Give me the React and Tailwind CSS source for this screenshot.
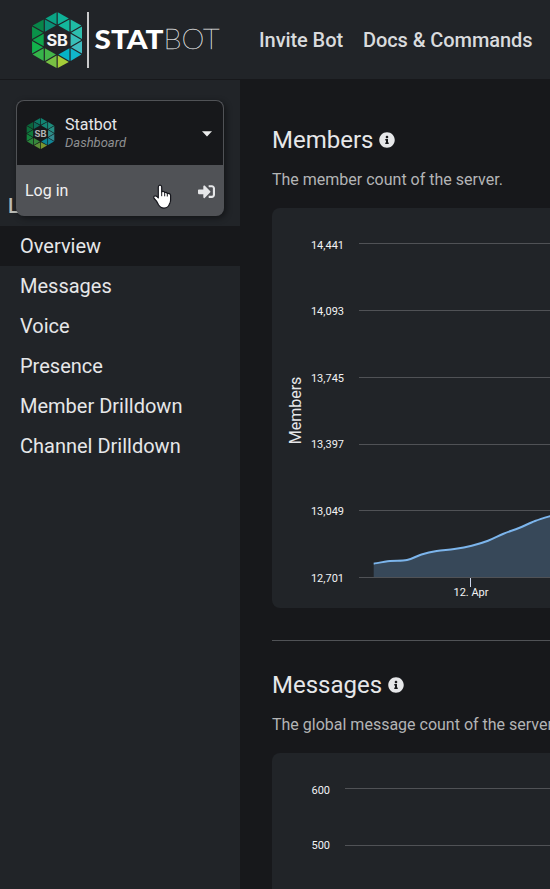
import React from "react";
import { FaInfoCircle, FaSignInAlt } from "react-icons/fa";

const triangles = [
  ["110,36 110,77 73,57", "#0aa384"],
  ["110,36 110,77 147,57", "#0fb298"],
  ["73,57 73,98 110,77", "#0b8f76"],
  ["147,57 147,98 110,77", "#14b79c"],
  ["36,77 73,57 73,98", "#088549"],
  ["36,77 36,119 73,98", "#0a9249"],
  ["36,119 73,98 73,140", "#0ca54b"],
  ["36,119 36,161 73,140", "#12b14c"],
  ["36,161 73,140 73,182", "#35b44a"],
  ["73,140 73,182 110,161", "#44b649"],
  ["73,182 110,161 110,202", "#78c143"],
  ["110,202 110,161 147,182", "#a5cd39"],
  ["147,140 147,182 110,161", "#06b4c6"],
  ["183,161 147,140 147,182", "#10b5cb"],
  ["183,119 183,161 147,140", "#3fbcc0"],
  ["183,119 147,98 147,140", "#38bfb9"],
  ["183,77 183,119 147,98", "#2dbfae"],
  ["183,77 147,57 147,98", "#1fbca5"],
];

function shrink(points, k) {
  const p = points.split(" ").map((s) => s.split(",").map(Number));
  const cx = (p[0][0] + p[1][0] + p[2][0]) / 3;
  const cy = (p[0][1] + p[1][1] + p[2][1]) / 3;
  return p.map(([x, y]) => `${cx + (x - cx) * k},${cy + (y - cy) * k}`).join(" ");
}

function Hexagon({ className }) {
  return (
    <svg viewBox="38 38.5 143 161" className={className}>
      {triangles.map(([pts, fill]) => (
        <polygon key={pts} points={shrink(pts, 0.86)} fill={fill} />
      ))}
      <text
        x="79"
        y="135"
        textLength="62"
        lengthAdjust="spacingAndGlyphs"
        fill="#f4f5f6"
        fontFamily="Inter, sans-serif"
        fontWeight="700"
        fontSize="44"
      >
        SB
      </text>
    </svg>
  );
}

function Logo() {
  return (
    <div className="flex h-14 items-center">
      <Hexagon className="h-[56px] w-[50px]" />
      <div className="ml-[5px] h-14 w-[2px] bg-[#c9cacb]" />
      <svg viewBox="0 0 132 40" className="ml-[5px] h-10 w-[132px]">
        <text x="0.5" y="28.500" textLength="69" lengthAdjust="spacingAndGlyphs" fill="#ffffff" fontFamily="Lato, sans-serif" fontWeight="900" fontSize="27">
          STAT
        </text>
        <text
          x="69.5"
          y="28.500"
          textLength="56"
          lengthAdjust="spacingAndGlyphs"
          fill="#d4d5d6"
          stroke="#d4d5d6"
          strokeWidth="0.35"
          fontFamily="Lato, sans-serif"
          fontWeight="100"
          fontSize="27"
        >
          BOT
        </text>
      </svg>
    </div>
  );
}

function Pointer() {
  return (
    <svg viewBox="0 0 19 25" className="absolute top-[84px] left-[137px] h-[25px] w-[19px]">
      <path
        d="M5.300 3c0-1.200.8-1.900 1.700-1.900s1.700.7 1.700 1.900v4.900c.4-.5 1-.6 1.600-.5.700.1 1.200.5 1.400 1.100.9-.4 2.200-.1 2.500 1 1.400-.4 3.400.1 3.400 2.100v4.600c0 1.900-.6 3-1.300 4.200-.7 2-2 3.700-5.300 3.700-2.800 0-4.300-1.200-5.500-3.300l-2-3.700L1.200 14.500c-.8-1-.5-2.100.4-2.500.9-.4 1.700-.1 2.400.6l1.300 1.300z"
        fill="#ffffff"
        stroke="#15161c"
        strokeWidth="1.200"
        strokeLinejoin="round"
      />
      <path d="M8.700 7.900v4.300M11.700 8.500v3.800M14.300 9.500v3" stroke="#15161c" strokeWidth="1" fill="none" />
    </svg>
  );
}

const navItems = ["Overview", "Messages", "Voice", "Presence", "Member Drilldown", "Channel Drilldown"];

function Sidebar() {
  return (
    <aside className="relative w-60 shrink-0 bg-[#212428]">
      <div className="flex h-[146px] items-end pb-[5px] pl-[8px]">
        <span className="text-xl leading-[30px] font-medium text-[#bcbdb8]">L</span>
      </div>
      <nav>
        {navItems.map((label, i) => (
          <div key={label} className={`flex h-10 items-center pl-5 text-xl text-[#e6e7e9] ${i === 0 ? "bg-[#17181b]" : ""}`}>
            {label}
          </div>
        ))}
      </nav>
      <div className="absolute top-5 left-4 w-52 rounded-[8px] shadow-[2px_2px_6px_rgba(0,0,0,0.45)]">
        <div className="flex h-[65px] items-center rounded-t-[8px] border border-b-0 border-[#505256] bg-[#17181b] pr-[11px] pl-[9px]">
          <Hexagon className="h-[31px] w-[29px] opacity-70" />
          <div className="ml-[10px] flex-1">
            <div className="text-base leading-[19px] text-[#e6e7e9]">Statbot</div>
            <div className="text-[13px] leading-[17px] text-[#8f9092] italic">Dashboard</div>
          </div>
          <svg viewBox="0 0 10 6" className="mt-[2px] h-[6px] w-[10px]">
            <path d="M0 .3h10L5 5.600z" fill="#eceded" />
          </svg>
        </div>
        <div className="flex h-[51px] items-center justify-between rounded-b-[8px] bg-[#505256] pr-[9px] pl-[9px] text-base text-[#f0f0f1]">
          Log in
          <FaSignInAlt className="mt-px size-[17px] text-[#e6e7e9]" />
        </div>
        <Pointer />
      </div>
    </aside>
  );
}

const curve = [
  [101.7, 355.7], [118, 353], [135, 352], [149.5, 346.5], [164.7, 343], [182.3, 341],
  [199.7, 337.7], [216, 332.7], [231.5, 325.7], [247, 320], [263, 313], [278, 308.2], [294, 304],
];

function smooth(p) {
  let d = `M${p[0][0]} ${p[0][1]}`;
  for (let i = 0; i < p.length - 1; i++) {
    const a = p[i - 1] || p[i];
    const b = p[i];
    const c = p[i + 1];
    const e = p[i + 2] || c;
    d += `C${b[0] + (c[0] - a[0]) / 6} ${b[1] + (c[1] - a[1]) / 6} ${c[0] - (e[0] - b[0]) / 6} ${c[1] - (e[1] - b[1]) / 6} ${c[0]} ${c[1]}`;
  }
  return d;
}

function Chart({ ticks, left, labelX, title, points }) {
  return (
    <div className="h-[400px] w-[600px] rounded-[8px] bg-[#212428]">
      <svg viewBox="0 0 600 400" className="size-full" fontFamily="Roboto, sans-serif" fontSize="11" fill="#e6e7e9">
        {ticks.map(([label, y, baseline]) => (
          <g key={label}>
            <path d={`M${left} ${y}H600`} stroke="#505256" />
            <text x={labelX} y={baseline} textAnchor="end" fill="#f2f3f4">{label}</text>
          </g>
        ))}
        {title && (
          <text transform="translate(28.5 202.500) rotate(-90)" textAnchor="middle" fontSize="16">{title}</text>
        )}
        {points && (
          <>
            <path d={`${smooth(points)}V369H${points[0][0]}Z`} fill="#7cb5ec" fillOpacity="0.25" />
            <path d={smooth(points)} fill="none" stroke="#7cb5ec" strokeWidth="2" />
            <path d="M198.5 370v9" stroke="#ccd6eb" />
            <text x="199" y="388" textAnchor="middle" fill="#f2f3f4">12. Apr</text>
          </>
        )}
      </svg>
    </div>
  );
}

function Section({ title, description, children }) {
  return (
    <section>
      <h2 className="flex items-center text-2xl leading-[30px] text-[#e6e7e9]">
        {title}
        <FaInfoCircle className="ml-[6px] size-4" />
      </h2>
      <p className="mt-[13px] mb-4 text-base leading-6 whitespace-nowrap text-[#b3b4b5]">{description}</p>
      {children}
    </section>
  );
}

export default function App() {
  return (
    <div className="flex h-[889px] w-[550px] flex-col overflow-hidden bg-[#17181b] font-[Roboto,sans-serif]">
      <header className="flex h-20 shrink-0 items-center border-b border-[#17181b] bg-[#212428] pl-8">
        <Logo />
        <nav className="ml-[33px] flex gap-5 text-xl font-medium tracking-[-0.08px] whitespace-nowrap text-[#d9dbdd]">
          <span>Invite Bot</span>
          <span>Docs &amp; Commands</span>
        </nav>
      </header>
      <div className="flex min-h-0 flex-1">
        <Sidebar />
        <main className="min-w-0 flex-1 overflow-hidden pt-[45px] pl-8">
          <Section title="Members" description="The member count of the server.">
            <Chart
              ticks={[
                ["14,441", 35.5, 41],
                ["14,093", 102.5, 107],
                ["13,745", 169.5, 174],
                ["13,397", 236.5, 240],
                ["13,049", 302.5, 307],
                ["12,701", 369.5, 374],
              ]}
              left={87}
              labelX={72}
              title="Members"
              points={curve}
            />
          </Section>
          <hr className="mt-8 mb-[29px] border-[#505256]" />
          <Section title="Messages" description="The global message count of the server.">
            <Chart ticks={[["600", 35.5, 41], ["500", 92.5, 96]]} left={73} labelX={58} />
          </Section>
        </main>
      </div>
    </div>
  );
}
